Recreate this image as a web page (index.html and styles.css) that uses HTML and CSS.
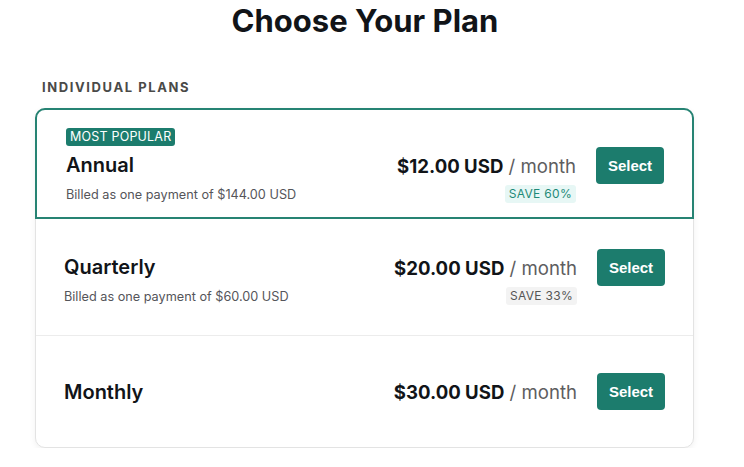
FILE: index.html
```html
<!DOCTYPE html>
<html lang="en">
<head>
    <meta charset="UTF-8">
    <meta name="viewport" content="width=device-width, initial-scale=1.0">
    <title>Choose Your Plan</title>
    <link rel="stylesheet" href="styles.css">
</head>
<body>
    <main class="page">
        <h1 class="title">Choose Your Plan</h1>
        <h3 class="group-label">INDIVIDUAL PLANS</h3>

        <!-- Plan list -->
        <div class="plans">
            <div class="plan featured">
                <div class="plan-info">
                    <span class="popular">MOST POPULAR</span>
                    <div class="plan-name">Annual</div>
                    <div class="plan-billed">Billed as one payment of $144.00 USD</div>
                </div>
                <div class="plan-buy">
                    <div class="price"><strong>$12.00 USD</strong> / month</div>
                    <button class="select-btn">Select</button>
                    <span class="save save-green">SAVE 60%</span>
                </div>
            </div>

            <div class="plan">
                <div class="plan-info">
                    <div class="plan-name">Quarterly</div>
                    <div class="plan-billed">Billed as one payment of $60.00 USD</div>
                </div>
                <div class="plan-buy">
                    <div class="price"><strong>$20.00 USD</strong> / month</div>
                    <button class="select-btn">Select</button>
                    <span class="save">SAVE 33%</span>
                </div>
            </div>

            <div class="plan">
                <div class="plan-info">
                    <div class="plan-name">Monthly</div>
                </div>
                <div class="plan-buy">
                    <div class="price"><strong>$30.00 USD</strong> / month</div>
                    <button class="select-btn">Select</button>
                </div>
            </div>
        </div>
    </main>
</body>
</html>
```

FILE: styles.css
```css
* {
    margin: 0;
    padding: 0;
    box-sizing: border-box;
}

body {
    font-family: Inter, "Open Sans", Arial, sans-serif;
    background-color: #fff;
    color: #111;
}

.page {
    width: 659px;
    margin-left: 35px;
}

.title {
    text-align: center;
    font-size: 31px;
    font-weight: 700;
    line-height: 42px;
    color: #111418;
    padding-left: 1px;
}

.group-label {
    margin: 37px 0 13px 7px;
    font-size: 13px;
    font-weight: 700;
    letter-spacing: 1.6px;
    line-height: 16px;
    color: #4a4a48;
}

.plans {
    border: 1px solid #e3e3e3;
    border-radius: 10px;
    box-shadow: 0 2px 6px rgba(0, 0, 0, 0.06);
    background-color: #fff;
}

.plan {
    display: flex;
    align-items: center;
    min-height: 117px;
    padding: 0 28px;
    border-bottom: 1px solid #ececec;
}

.plan:last-child {
    border-bottom: none;
    min-height: 111px;
}

.plan.featured {
    margin: -1px -1px 0;
    min-height: 111px;
    padding: 23px 28px 0 29px;
    border: 2px solid #268373;
    border-radius: 10px 10px 0 0;
}

.plan-info {
    flex: 1;
    position: relative;
    padding-top: 7px;
}

.plan:last-child .plan-info {
    padding-top: 0;
}

/* badge sits above the plan name */
.popular {
    position: absolute;
    left: 0;
    bottom: 100%;
    margin-bottom: 0;
    background-color: #1c7c6d;
    color: #fff;
    font-size: 12.5px;
    line-height: 18px;
    letter-spacing: 0.2px;
    padding: 0 4px;
    border-radius: 3px;
    white-space: nowrap;
}

.plan-name {
    font-size: 20px;
    font-weight: 600;
    line-height: 24px;
    color: #111418;
}

.plan-billed {
    margin-top: 9px;
    font-size: 12.7px;
    line-height: 18px;
    color: #55555a;
}

.plan-buy {
    display: grid;
    grid-template-columns: auto auto;
    column-gap: 20px;
    align-items: center;
}

.price {
    font-size: 18.6px;
    line-height: 24px;
    color: #5d5d60;
    white-space: nowrap;
}

.price strong {
    color: #111418;
    font-weight: 700;
}

.save {
    grid-column: 1;
    justify-self: end;
    margin-top: 1px;
    font-size: 12px;
    line-height: 18px;
    padding: 0 4px;
    border-radius: 3px;
    letter-spacing: 0.3px;
    background-color: #f3f3f3;
    color: #555;
}

.save-green {
    background-color: #e7f7f5;
    color: #1f8a78;
}

.select-btn {
    background-color: #1c7c6d;
    color: #fff;
    border: none;
    border-radius: 4px;
    width: 68px;
    height: 37px;
    font-family: Arial, "Liberation Sans", sans-serif;
    font-size: 15px;
    font-weight: 700;
    cursor: pointer;
}
```
